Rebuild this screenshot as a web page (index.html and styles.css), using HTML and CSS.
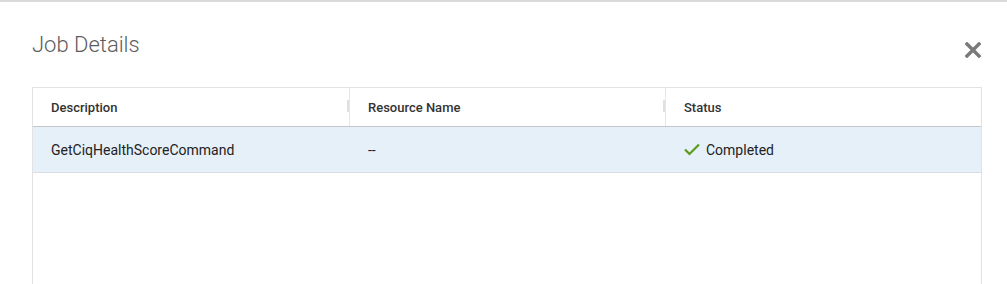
FILE: index.html
```html
<!DOCTYPE html>
<html lang="en">
<head>
    <meta charset="UTF-8">
    <meta name="viewport" content="width=device-width, initial-scale=1.0">
    <title>Job Details</title>
    <link rel="stylesheet" href="styles.css">
</head>
<body>

<div class="modal">
    <div class="modal-header">
        <h2 class="modal-title">Job Details</h2>
        <button class="modal-close" aria-label="Close">
            <svg width="16" height="16" viewBox="0 0 16 16">
                <path d="M2 2 L14 14 M14 2 L2 14" stroke="#7a7a7a" stroke-width="3.4" stroke-linecap="square"/>
            </svg>
        </button>
    </div>

    <div class="grid">
        <div class="grid-head">
            <div class="head-cell">Description<span class="resizer"></span></div>
            <div class="head-cell">Resource Name<span class="resizer"></span></div>
            <div class="head-cell">Status</div>
        </div>
        <div class="grid-row selected">
            <div class="cell">GetCiqHealthScoreCommand</div>
            <div class="cell">--</div>
            <div class="cell status">
                <svg class="check" width="16" height="13" viewBox="0 0 16 13">
                    <path d="M1 6.5 L5.5 11 L15 1.5" fill="none" stroke="#5d9a1c" stroke-width="2.2"/>
                </svg>
                Completed
            </div>
        </div>
    </div>
</div>

</body>
</html>
```

FILE: styles.css
```css
body {
    margin: 0;
    font-family: Roboto, "Liberation Sans", sans-serif;
    background-color: white;
    overflow: hidden;
}

.modal {
    border-top: 2px solid #d9d9d9;
    padding: 0 25px 0 32px;
}

.modal-header {
    display: flex;
    justify-content: space-between;
    align-items: flex-start;
    padding-top: 30px;
    height: 55px;
}

.modal-title {
    margin: 0;
    font-size: 22px;
    font-weight: 300;
    line-height: 26px;
    color: #5c5c5c;
}

.modal-close {
    background: none;
    border: none;
    padding: 0;
    margin-top: 10px;
    margin-right: 1px;
    width: 16px;
    height: 16px;
    cursor: pointer;
}

.grid {
    border: 1px solid #e2e2e2;
    border-bottom: none;
    height: 196px;
}

.grid-head, .grid-row {
    display: grid;
    grid-template-columns: 316px 316px 1fr;
}

.grid-head {
    height: 38px;
    border-bottom: 1px solid #c4c6c9;
}

.head-cell {
    position: relative;
    display: flex;
    align-items: center;
    padding-left: 18px;
    font-size: 13px;
    font-weight: 500;
    color: #333;
}

.head-cell + .head-cell {
    border-left: 1px solid #e6e6e6;
}

.resizer {
    position: absolute;
    right: 0;
    top: 12px;
    width: 2px;
    height: 12px;
    background-color: #e0e0e0;
}

.grid-row {
    height: 45px;
    border-bottom: 1px solid #d9dee4;
}

.grid-row.selected {
    background-color: #e6f0f9;
}

.cell {
    display: flex;
    align-items: center;
    padding-left: 18px;
    font-size: 14px;
    color: #222;
}

.cell + .cell {
    padding-left: 19px;
}

.status .check {
    margin-right: 6px;
}
```
